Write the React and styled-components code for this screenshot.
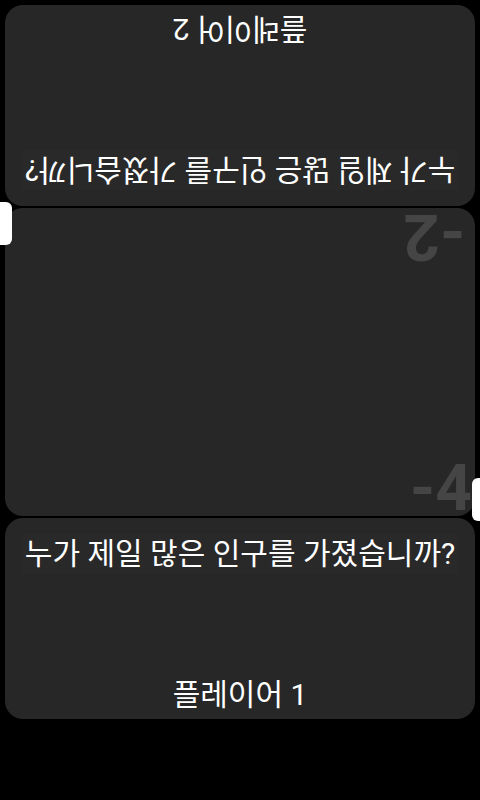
import styled, { createGlobalStyle } from 'styled-components';

const GlobalStyle = createGlobalStyle`
  html, body {
    margin: 0;
    padding: 0;
    background: #000;
  }
  #root {
    height: 800px;
    background: #000;
  }
`;

const Board = styled.div`
  display: flex;
  flex-direction: column;
  gap: 2px;
  padding: 5px;
  font-family: Roboto, 'Noto Sans CJK KR', sans-serif;
  color: #fff;
`;

const PlayerCard = styled.div`
  height: 201px;
  box-sizing: border-box;
  background: #272727;
  border-radius: 18px;
  display: flex;
  flex-direction: column;
  justify-content: space-between;
  align-items: center;
  padding: 16px 8px 4px;
  transform: ${(p) => (p.$flipped ? 'rotate(180deg)' : 'none')};
`;

const Question = styled.div`
  font-size: 30px;
  line-height: 40px;
  padding: 0 3px;
  background: #292929;
  white-space: nowrap;
`;

const PlayerName = styled.div`
  font-size: 30px;
  line-height: 40px;
`;

const ScoreCard = styled.div`
  position: relative;
  height: 308px;
  box-sizing: border-box;
  background: #272727;
  border-radius: 18px;
  display: flex;
  flex-direction: column;
  justify-content: space-between;
  align-items: flex-end;
  padding: 0 3px 0 0;
`;

const Score = styled.div`
  font-family: Roboto, sans-serif;
  font-weight: 700;
  font-size: 64px;
  line-height: 60px;
  color: #454545;
  transform: ${(p) => (p.$flipped ? 'rotate(180deg)' : 'translateY(3px)')};
  margin-right: ${(p) => (p.$flipped ? '7px' : '0')};
  margin-top: ${(p) => (p.$flipped ? '-2px' : '0')};
`;

const Handle = styled.div`
  position: absolute;
  width: 12px;
  height: 43px;
  background: #fff;
  ${(p) =>
    p.$side === 'left'
      ? 'left: -5px; top: -6px; border-radius: 0 6px 6px 0;'
      : 'right: -9px; top: 270px; border-radius: 6px 0 0 6px;'}
`;

const question = '누가 제일 많은 인구를 가졌습니까?';

function App() {
  return (
    <>
      <GlobalStyle />
      <Board>
        <PlayerCard $flipped>
          <Question>{question}</Question>
          <PlayerName>플레이어 2</PlayerName>
        </PlayerCard>
        <ScoreCard>
          <Handle $side="left" />
          <Score $flipped>-2</Score>
          <Score>-4</Score>
          <Handle $side="right" />
        </ScoreCard>
        <PlayerCard>
          <Question>{question}</Question>
          <PlayerName>플레이어 1</PlayerName>
        </PlayerCard>
      </Board>
    </>
  );
}

export default App;
